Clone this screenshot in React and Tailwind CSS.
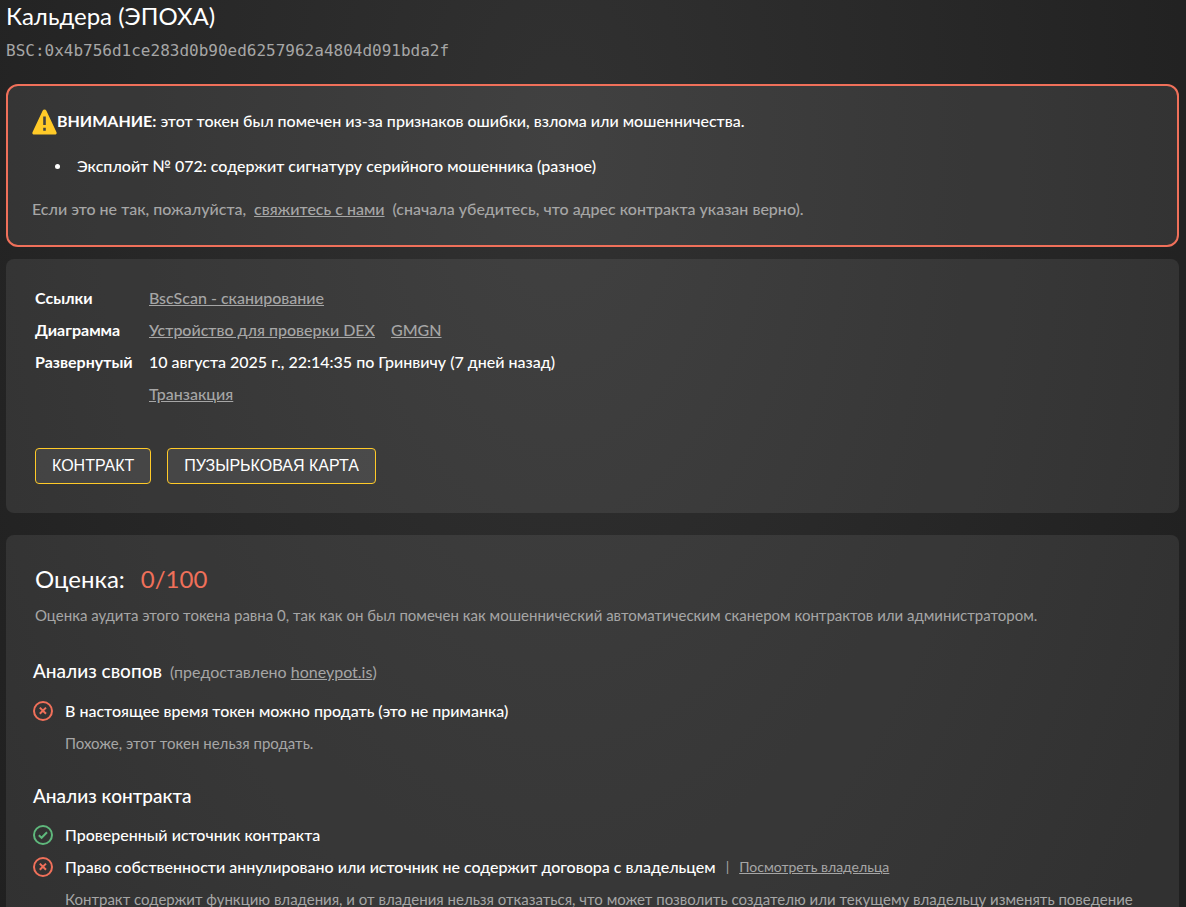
import React from 'react';

const checks = [
    { ok: true, text: 'Проверенный источник контракта' },
    {
        ok: false,
        text: 'Право собственности аннулировано или источник не содержит договора с владельцем',
        link: 'Посмотреть владельца',
        note: 'Контракт содержит функцию владения, и от владения нельзя отказаться, что может позволить создателю или текущему владельцу изменять поведение',
    },
];

const WarningIcon = () => (
    <svg className="h-[26px] w-[25px] shrink-0" viewBox="0 0 25 26" aria-hidden="true">
        <path d="M12.5 0.6c.8 0 1.5.4 1.9 1.1L24.4 23c.7 1.4-.2 2.6-1.7 2.6H2.3C.8 25.6-.1 24.4.6 23L10.6 1.7c.4-.7 1.1-1.1 1.9-1.1z" fill="#ffca28" />
        <path d="M11.2 7.6h2.6v8.4h-2.6zM11.2 18.8h2.6v3h-2.6z" fill="#424242" />
    </svg>
);

const StatusIcon = ({ ok }) => (
    <svg
        className={ok ? 'size-5 shrink-0 text-[#5fb87c]' : 'size-5 shrink-0 text-[#f0705a]'}
        viewBox="0 0 20 20"
        fill="none"
        stroke="currentColor"
        strokeWidth="2"
        role="img"
        aria-label={ok ? 'Пройдено' : 'Не пройдено'}
    >
        <circle cx="10" cy="10" r="9" />
        {ok ? <path d="M5.8 10.2l2.8 2.6 5.4-5.6" /> : <path d="M6.8 6.6l6.2 6.2M13 6.6l-6.2 6.2" />}
    </svg>
);

const TextLink = ({ children, className = '' }) => (
    <a href="#" className={`text-[#a6a6a6] underline ${className}`}>
        {children}
    </a>
);

const CheckRow = ({ ok, text, link, note }) => (
    <li>
        <div className="flex min-h-8 items-center gap-3">
            <StatusIcon ok={ok} />
            <div className="flex items-center gap-2.5">
                <span className="font-medium">{text}</span>
                {link && (
                    <>
                        <span className="text-sm text-[#a6a6a6]">|</span>
                        <TextLink className="text-sm">{link}</TextLink>
                    </>
                )}
            </div>
        </div>
        {note && <p className="ml-8 text-[15px] leading-8 text-[#a6a6a6]">{note}</p>}
    </li>
);

const Card = ({ children, className = '' }) => (
    <section className={`rounded-lg bg-white/8 px-[29px] ${className}`}>{children}</section>
);

const OutlineButton = ({ children }) => (
    <button
        type="button"
        className="h-9 rounded border border-[#ffca28] bg-white/8 px-4 font-['Liberation_Sans',sans-serif] text-base uppercase text-white"
    >
        {children}
    </button>
);

const App = () => (
    <main className="min-h-screen bg-[radial-gradient(60%_140%_at_47%_15%,#313131,#202020)] bg-fixed pr-[7px] pl-1.5 font-['Lato','Noto_Sans',sans-serif] text-base text-white">
        <h1 className="text-2xl leading-8">Кальдера (ЭПОХА)</h1>
        <p className="mt-1 font-['DejaVu_Sans_Mono',monospace] leading-[30px] text-[#a6a6a6]">
            BSC:0x4b756d1ce283d0b90ed6257962a4804d091bda2f
        </p>

        {/* Scam alert */}
        <section className="mt-[18px] rounded-xl border-2 border-[#f0705a] bg-white/8 px-6 pt-[23px] pb-6 leading-6">
            <p className="flex items-start">
                <WarningIcon />
                <span className="font-medium">
                    <strong className="font-bold">ВНИМАНИЕ:</strong> этот токен был помечен из-за признаков ошибки, взлома или мошенничества.
                </span>
            </p>
            <ul className="mt-[19px] pl-[23px] font-medium">
                <li className="flex items-center gap-[17px]">
                    <span className="size-[5px] rounded-full bg-white" />
                    Эксплойт № 072: содержит сигнатуру серийного мошенника (разное)
                </li>
            </ul>
            <p className="mt-[19px] font-medium text-[#a6a6a6]">
                Если это не так, пожалуйста,
                <TextLink className="mx-2">свяжитесь с нами</TextLink>
                (сначала убедитесь, что адрес контракта указан верно).
            </p>
        </section>

        {/* Token info */}
        <Card className="mt-3 pt-[23px] pb-[29px] font-medium">
            <dl className="grid grid-cols-[114px_1fr] leading-8">
                <dt className="font-bold">Ссылки</dt>
                <dd>
                    <TextLink>BscScan - сканирование</TextLink>
                </dd>
                <dt className="font-bold">Диаграмма</dt>
                <dd className="flex gap-4">
                    <TextLink>Устройство для проверки DEX</TextLink>
                    <TextLink>GMGN</TextLink>
                </dd>
                <dt className="font-bold">Развернутый</dt>
                <dd>
                    10 августа 2025 г., 22:14:35 по Гринвичу (7 дней назад)
                    <br />
                    <TextLink>Транзакция</TextLink>
                </dd>
            </dl>
            <div className="mt-[38px] flex gap-4">
                <OutlineButton>Контракт</OutlineButton>
                <OutlineButton>Пузырьковая карта</OutlineButton>
            </div>
        </Card>

        {/* Audit score */}
        <Card className="mt-[22px] pt-7 pb-6">
            <h2 className="flex gap-4 text-2xl leading-8">
                Оценка: <span className="text-[#f0705a]">0/100</span>
            </h2>
            <p className="mt-2 text-[15px] leading-6 text-[#a6a6a6]">
                Оценка аудита этого токена равна 0, так как он был помечен как мошеннический автоматическим сканером контрактов или администратором.
            </p>

            <div className="-ml-0.5">
                <div className="mt-7 flex items-baseline gap-2 leading-8">
                    <h3 className="text-[19px] leading-8 font-medium">Анализ свопов</h3>
                    <span className="text-[#a6a6a6]">
                        (предоставлено <TextLink>honeypot.is</TextLink>)
                    </span>
                </div>
                <ul className="mt-[7px]">
                    <CheckRow
                        ok={false}
                        text="В настоящее время токен можно продать (это не приманка)"
                        note="Похоже, этот токен нельзя продать."
                    />
                </ul>

                <h3 className="mt-[21px] text-[19px] leading-8 font-medium">Анализ контракта</h3>
                <ul className="mt-[7px]">
                    {checks.map(check => (
                        <CheckRow key={check.text} {...check} />
                    ))}
                </ul>
            </div>
        </Card>
    </main>
);

export default App;
